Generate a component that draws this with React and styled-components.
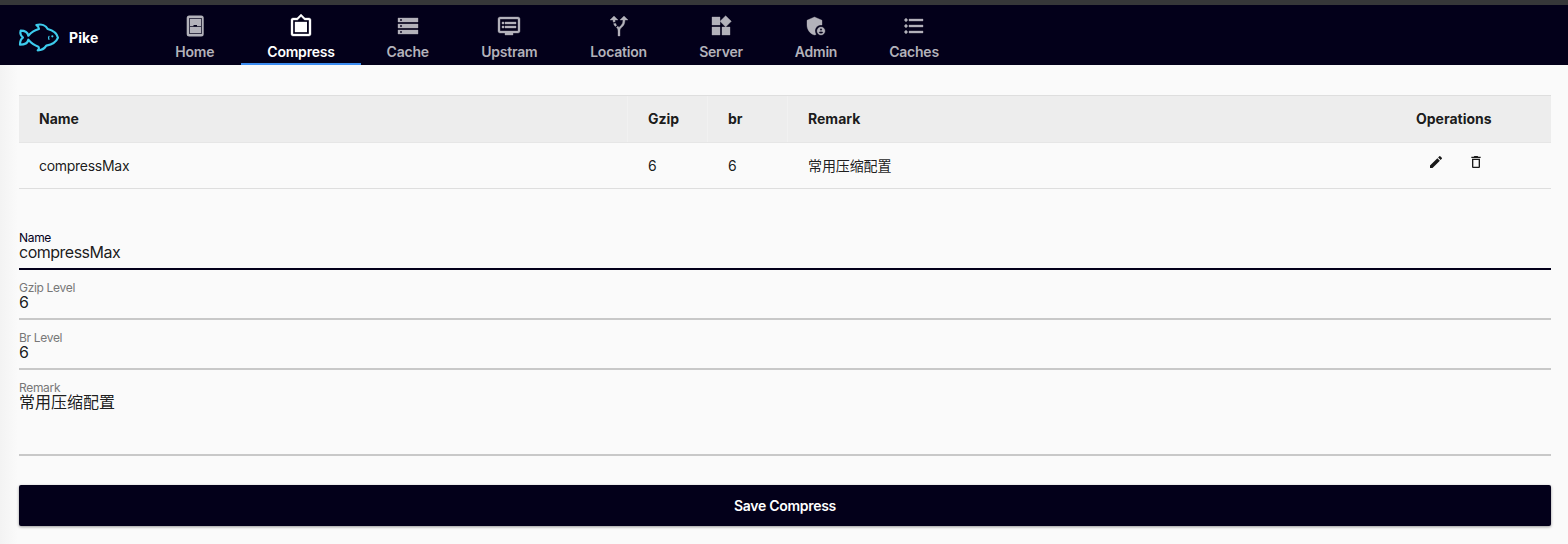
import React from "react";
import styled, { createGlobalStyle } from "styled-components";
import {
  MdFilterFrames,
  MdStorage,
  MdDvr,
  MdAltRoute,
  MdWidgets,
  MdAdminPanelSettings,
  MdFormatListBulleted,
  MdEdit,
  MdDeleteOutline,
} from "react-icons/md";

const GlobalStyle = createGlobalStyle`
  *, *::before, *::after { box-sizing: border-box; }
  body {
    margin: 0;
    background: #fafafa;
    color: rgba(0, 0, 0, 0.9);
    font-family: Inter, "Noto Sans CJK SC", sans-serif;
    font-size: 14px;
  }
`;

const Page = styled.div`
  height: 544px;
  overflow: hidden;
  background: linear-gradient(to right, #f3f3f3, #fafafa 18px);
`;

const Header = styled.header`
  display: flex;
  height: 65px;
  border-top: 5px solid #363739;
  background: #03001a;
`;

const Brand = styled.div`
  display: flex;
  align-items: center;
  gap: 9px;
  width: 148.5px;
  padding: 5px 0 0 18px;
  color: #fff;
  font-weight: 700;
  letter-spacing: 0.1px;
  svg { margin-top: -2px; }
`;

const Nav = styled.nav`
  display: flex;
`;

const Tab = styled.a`
  display: flex;
  flex-direction: column;
  align-items: center;
  width: ${(p) => p.$width}px;
  padding-top: 9px;
  border-bottom: 2px solid ${(p) => (p.$active ? "#3c8cf0" : "transparent")};
  color: ${(p) => (p.$active ? "#fff" : "#b3b2ba")};
  font-weight: 600;
  letter-spacing: -0.22px;
  line-height: 20px;
  white-space: nowrap;
  svg { display: block; margin-bottom: 4px; stroke-width: 0.35px; }
  svg [fill="none"] { stroke: none; }
`;

const Content = styled.main`
  padding: 30px 17px 0 19px;
`;

const Row = styled.div`
  display: grid;
  grid-template-columns: 609px 80px 80px 1fr 155px;
  height: ${(p) => (p.$head ? 48 : 46)}px;
  border-top: ${(p) => (p.$head ? "1px solid #dedede" : "0")};
  border-bottom: 1px solid ${(p) => (p.$head ? "#e6e6e6" : "#dedede")};
  background: ${(p) => (p.$head ? "#ededed" : "transparent")};
  font-weight: ${(p) => (p.$head ? 700 : 400)};
  letter-spacing: ${(p) => (p.$head ? 0 : -0.28)}px;
`;

const Cell = styled.div`
  display: flex;
  align-items: center;
  padding: 0 0 ${(p) => p.$lift || 0}px 20px;
  border-right: 1px solid ${(p) => (p.$divider ? "#f1f1f1" : "transparent")};
`;

const CjkCell = styled(Cell)`
  letter-spacing: -0.1px;
`;

const Operations = styled.div`
  display: flex;
  align-items: center;
  gap: 24px;
  padding: 0 0 8px 32px;
`;

const Form = styled.form`
  padding-top: 42px;
`;

const Field = styled.label`
  display: block;
  height: ${(p) => p.$height || 50}px;
  padding-top: ${(p) => (p.$first ? 0 : 11)}px;
  border-bottom: 2px solid ${(p) => (p.$focused ? "#03001a" : "#c8c8c8")};
`;

const FieldName = styled.span`
  display: block;
  color: ${(p) => (p.$focused ? "#03001a" : "#777")};
  font-size: 12px;
  line-height: 14px;
  letter-spacing: -0.32px;
`;

const FieldValue = styled.span`
  display: block;
  margin-top: -1px;
  font-size: 16px;
  line-height: 16px;
  letter-spacing: ${(p) => (p.$cjk ? 0 : -0.5)}px;
`;

const SaveButton = styled.button`
  display: block;
  width: 100%;
  height: 41px;
  margin-top: 29px;
  padding: 0;
  border: 0;
  border-radius: 2px;
  background: #03001a;
  color: #fff;
  box-shadow: 0 1px 3px rgba(0, 0, 0, 0.4);
  font: 600 14px Inter, sans-serif;
  letter-spacing: -0.3px;
`;

const FishLogo = () => (
  <svg width="42" height="30" viewBox="54 66 126 90" fill="none" stroke="#3dcbed" strokeWidth="6.5" strokeLinecap="round" strokeLinejoin="round">
    <path d="M62 92C74 92 83 98 85 107C94 97 105 90 117 87C116 80 113 77 109 75C125 71 138 77 143 87C158 91 171 101 174 113C169 126 155 134 139 137C134 145 125 151 113 151C117 148 118 144 115 140C103 136 93 129 85 119C83 129 74 134 60 134C60 125 62 117 69 113C62 107 60 99 62 92Z" />
    <path d="M147 109Q144 113 147 118" strokeWidth="3.5" />
    <circle cx="157" cy="109" r="1.5" strokeWidth="3.5" />
  </svg>
);

const CabinetIcon = () => (
  <svg width="24" height="24" viewBox="0 0 24 24">
    <rect x="3.7" y="1.5" width="17" height="21" rx="2.5" fill="currentColor" />
    <path d="M6 4H19V20H6ZM7 5V12H18V5ZM7 13V19H18V13Z" fill="#03001a" fillOpacity="0.7" fillRule="evenodd" />
    <path d="M10.5 11H14V12.5H10.5Z" fill="#03001a" />
  </svg>
);

const tabs = [
  { name: "Home", icon: CabinetIcon, width: 92.5 },
  { name: "Compress", icon: MdFilterFrames, width: 120, active: true },
  { name: "Cache", icon: MdStorage, width: 93.5 },
  { name: "Upstram", icon: MdDvr, width: 109.5 },
  { name: "Location", icon: MdAltRoute, width: 109 },
  { name: "Server", icon: MdWidgets, width: 96 },
  { name: "Admin", icon: MdAdminPanelSettings, width: 94 },
  { name: "Caches", icon: MdFormatListBulleted, width: 102 },
];

const fields = [
  { name: "Name", value: "compressMax", focused: true, first: true, height: 39 },
  { name: "Gzip Level", value: "6" },
  { name: "Br Level", value: "6" },
  { name: "Remark", value: "常用压缩配置", cjk: true, height: 86 },
];

export default function App() {
  return (
    <Page>
      <GlobalStyle />
      <Header>
        <Brand><FishLogo />Pike</Brand>
        <Nav>
          {tabs.map(({ name, icon: Icon, width, active }) => (
            <Tab key={name} $width={width} $active={active}>
              <Icon size={24} />
              {name}
            </Tab>
          ))}
        </Nav>
      </Header>
      <Content>
        <Row $head>
          <Cell $divider $lift={1}>Name</Cell>
          <Cell $divider $lift={1}>Gzip</Cell>
          <Cell $divider $lift={1}>br</Cell>
          <Cell $lift={1}>Remark</Cell>
          <Cell $lift={1}>Operations</Cell>
        </Row>
        <Row>
          <Cell>compressMax</Cell>
          <Cell>6</Cell>
          <Cell>6</Cell>
          <CjkCell $lift={2}>常用压缩配置</CjkCell>
          <Operations><MdEdit size={16} /><MdDeleteOutline size={16} /></Operations>
        </Row>
        <Form>
          {fields.map((f) => (
            <Field key={f.name} $height={f.height} $focused={f.focused} $first={f.first}>
              <FieldName $focused={f.focused}>{f.name}</FieldName>
              <FieldValue $cjk={f.cjk}>{f.value}</FieldValue>
            </Field>
          ))}
          <SaveButton type="button">Save Compress</SaveButton>
        </Form>
      </Content>
    </Page>
  );
}
